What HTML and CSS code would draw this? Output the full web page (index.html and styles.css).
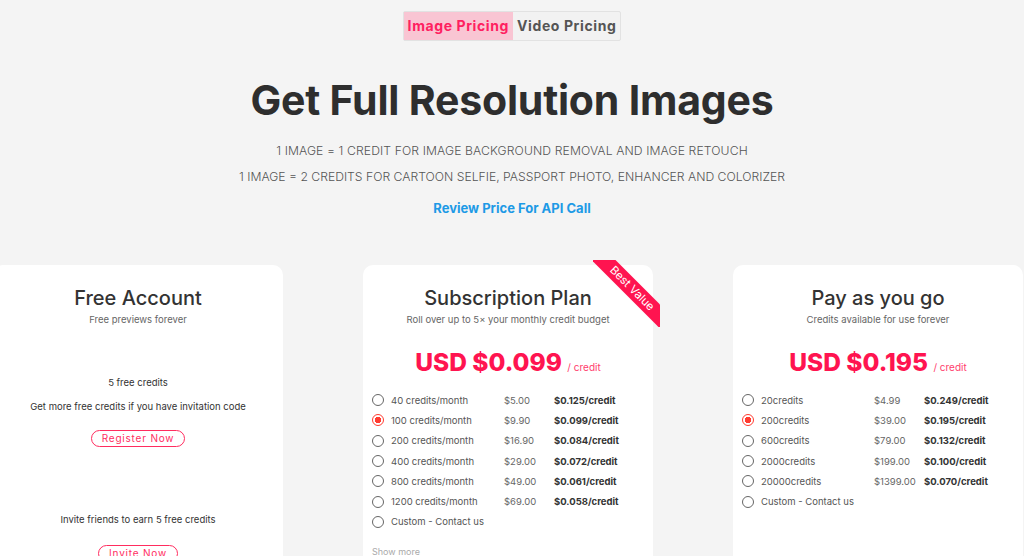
FILE: index.html
```html
<!DOCTYPE html>
<html>
<head>
  <meta charset="utf-8">
  <link rel="stylesheet" href="styles.css">
</head>
<body>
<div class="pricing-page">
  <div class="intro">
    <div class="tabs">
      <span class="tab active">Image Pricing</span>
      <span class="tab">Video Pricing</span>
    </div>
    <h1>Get Full Resolution Images</h1>
    <p class="note">1 IMAGE = 1 CREDIT FOR IMAGE BACKGROUND REMOVAL AND IMAGE RETOUCH</p>
    <p class="note">1 IMAGE = 2 CREDITS FOR CARTOON SELFIE, PASSPORT PHOTO, ENHANCER AND COLORIZER</p>
    <a class="api-link" href="#">Review Price For API Call</a>
  </div>

  <div class="plans">
    <div class="card">
      <h2>Free Account</h2>
      <p class="sub">Free previews forever</p>
      <div class="free-block first">
        <p>5 free credits</p>
        <p>Get more free credits if you have invitation code</p>
        <a class="outline-btn" href="#">Register Now</a>
      </div>
      <div class="free-block">
        <p>Invite friends to earn 5 free credits</p>
        <a class="outline-btn" href="#">Invite Now</a>
      </div>
    </div>

    <div class="card">
      <div class="ribbon"><span>Best Value</span></div>
      <h2>Subscription Plan</h2>
      <p class="sub">Roll over up to 5× your monthly credit budget</p>
      <div class="price">USD $0.099 <small>/ credit</small></div>
      <ul class="options">
        <li><span class="radio"></span><span class="qty">40 credits/month</span><span class="cost">$5.00</span><b>$0.125/credit</b></li>
        <li><span class="radio checked"></span><span class="qty">100 credits/month</span><span class="cost">$9.90</span><b>$0.099/credit</b></li>
        <li><span class="radio"></span><span class="qty">200 credits/month</span><span class="cost">$16.90</span><b>$0.084/credit</b></li>
        <li><span class="radio"></span><span class="qty">400 credits/month</span><span class="cost">$29.00</span><b>$0.072/credit</b></li>
        <li><span class="radio"></span><span class="qty">800 credits/month</span><span class="cost">$49.00</span><b>$0.061/credit</b></li>
        <li><span class="radio"></span><span class="qty">1200 credits/month</span><span class="cost">$69.00</span><b>$0.058/credit</b></li>
        <li><span class="radio"></span><span class="qty wide">Custom - Contact us</span></li>
      </ul>
      <p class="show-more">Show more</p>
    </div>

    <div class="card">
      <h2>Pay as you go</h2>
      <p class="sub">Credits available for use forever</p>
      <div class="price">USD $0.195 <small>/ credit</small></div>
      <ul class="options">
        <li><span class="radio"></span><span class="qty">20credits</span><span class="cost">$4.99</span><b>$0.249/credit</b></li>
        <li><span class="radio checked"></span><span class="qty">200credits</span><span class="cost">$39.00</span><b>$0.195/credit</b></li>
        <li><span class="radio"></span><span class="qty">600credits</span><span class="cost">$79.00</span><b>$0.132/credit</b></li>
        <li><span class="radio"></span><span class="qty">2000credits</span><span class="cost">$199.00</span><b>$0.100/credit</b></li>
        <li><span class="radio"></span><span class="qty">20000credits</span><span class="cost">$1399.00</span><b>$0.070/credit</b></li>
        <li><span class="radio"></span><span class="qty wide">Custom - Contact us</span></li>
      </ul>
    </div>
  </div>
</div>
</body>
</html>
```

FILE: styles.css
```css
body {
  margin: 0;
  background: #f4f4f4;
  font-family: "Inter", "Open Sans", sans-serif;
  color: #333;
  overflow: hidden;
}

.pricing-page {
  width: 1024px;
  height: 556px;
  overflow: hidden;
}

.intro {
  display: flex;
  flex-direction: column;
  align-items: center;
  padding-top: 11px;
}

.tabs {
  display: flex;
  border: 1px solid #e2e2e2;
  border-radius: 2px;
  background: #f2f2f2;
}
.tab {
  font-size: 14px;
  font-weight: 700;
  color: #555;
  padding: 0 4px;
  line-height: 28px;
  letter-spacing: 0.6px;
}
.tab.active {
  background: #f9c5d3;
  color: #ff2060;
}

h1 {
  margin: 35px 0 0;
  font-size: 41px;
  line-height: 48px;
  font-weight: 700;
  color: #2e2e2e;
  letter-spacing: -0.2px;
}

.note {
  margin: 0;
  font-size: 12.2px;
  font-weight: 300;
  color: #555;
  line-height: 26px;
}
.intro h1 + .note {
  margin-top: 14px;
  letter-spacing: 0.1px;
}

.api-link {
  margin-top: 5px;
  font-size: 13px;
  font-weight: 700;
  color: #1d9ae6;
  text-decoration: none;
  line-height: 26px;
}

.plans {
  display: flex;
  gap: 80px;
  width: 1030px;
  margin: 44px 0 0 -7px;
}

.card {
  position: relative;
  width: 290px;
  height: 320px;
  flex: none;
  background: #fff;
  border-radius: 10px;
  text-align: center;
  box-sizing: border-box;
  padding: 20px 9px 0;
}

.card h2 {
  margin: 0;
  font-size: 20px;
  font-weight: 500;
  color: #333;
  line-height: 26px;
}
.card .sub {
  margin: 2px 0 0;
  font-size: 9.5px;
  color: #666;
  line-height: 14px;
}

.free-block {
  font-size: 9.5px;
  color: #333;
}
.free-block.first {
  margin-top: 49px;
}
.free-block + .free-block {
  margin-top: 66px;
}
.free-block p {
  margin: 0 0 10px;
  line-height: 14px;
}
.free-block p:last-of-type {
  margin-bottom: 16px;
}
.free-block + .free-block p:last-of-type {
  margin-bottom: 18px;
}
.outline-btn {
  display: inline-block;
  border: 1.5px solid #ff2d5f;
  border-radius: 10px;
  color: #ff2d5f;
  font-size: 10px;
  letter-spacing: 0.8px;
  text-decoration: none;
  padding: 0 10px;
  line-height: 15px;
}

.price {
  margin-top: 18px;
  font-size: 24.5px;
  font-weight: 800;
  color: #ff1450;
  line-height: 34px;
}
.price small {
  font-size: 10px;
  font-weight: 400;
  color: #ff3c6c;
}

.options {
  list-style: none;
  margin: 6px 0 0;
  padding: 0;
  text-align: left;
}
.options li {
  display: flex;
  align-items: center;
  height: 20.3px;
  font-size: 9.5px;
  color: #555;
}
.radio {
  width: 10px;
  height: 10px;
  border: 1.5px solid #666;
  border-radius: 50%;
  margin-right: 7px;
  flex: none;
  background: #fff;
}
.radio.checked {
  border-color: #ff3b30;
  background: radial-gradient(circle, #ff3b30 0 3px, #fff 3.5px);
}
.qty {
  width: 113px;
}
.qty.wide {
  width: auto;
}
.cost {
  width: 50px;
  color: #666;
}
.options b {
  color: #333;
  font-weight: 700;
}

.show-more {
  margin: 14px 0 0;
  text-align: left;
  font-size: 9px;
  color: #aaa;
}

.ribbon {
  position: absolute;
  top: -5px;
  right: -7px;
  width: 67px;
  height: 67px;
  overflow: hidden;
}
.ribbon span {
  position: absolute;
  left: -11px;
  top: 20px;
  width: 100px;
  line-height: 17px;
  background: #ff1450;
  color: #fff;
  font-size: 11.5px;
  text-align: center;
  transform: rotate(45deg);
}
```
